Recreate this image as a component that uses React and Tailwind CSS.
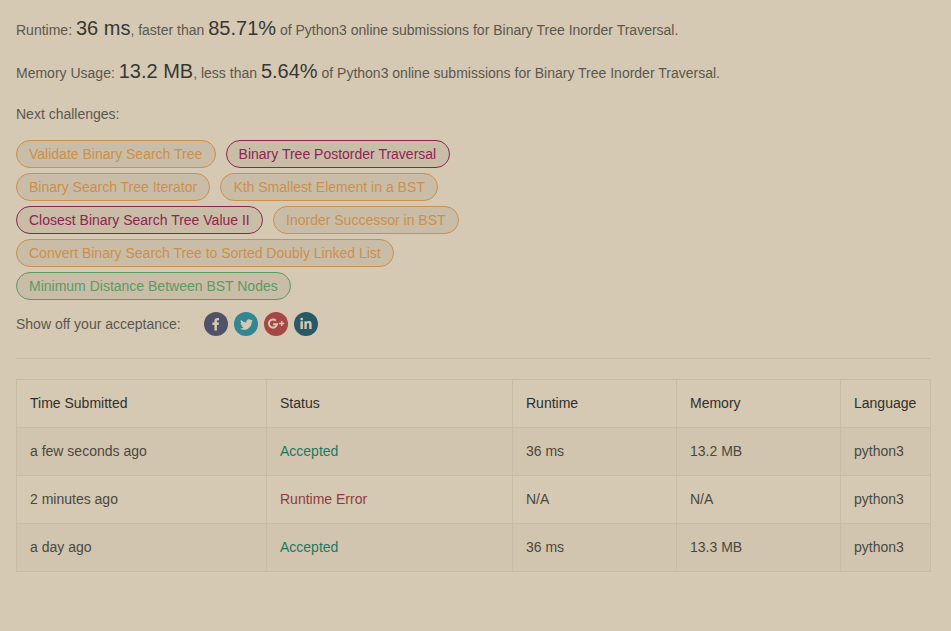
import React from "react";
import { FaTwitter } from "react-icons/fa";

const tones = {
  medium: "border-[#cb904c] text-[#cb904c]",
  hard: "border-[#8f2450] text-[#8f2450]",
  easy: "border-[#5c9a62] text-[#5c9a62]",
};

const challenges = [
  ["Validate Binary Search Tree", "medium"],
  ["Binary Tree Postorder Traversal", "hard"],
  ["Binary Search Tree Iterator", "medium"],
  ["Kth Smallest Element in a BST", "medium"],
  ["Closest Binary Search Tree Value II", "hard"],
  ["Inorder Successor in BST", "medium"],
  ["Convert Binary Search Tree to Sorted Doubly Linked List", "medium"],
  ["Minimum Distance Between BST Nodes", "easy"],
];

function FacebookGlyph() {
  return (
    <svg viewBox="0 0 24 24" className="size-6" fill="currentColor">
      <path d="M10.4 18.4V12.9h-2v-2.4h2V9.1c0-2 1.2-3.1 3-3.1H15v2.3h-1c-.8 0-1.1.4-1.1 1.1v1.1H15l-.3 2.4h-1.8v5.5z" />
    </svg>
  );
}

function TwitterGlyph() {
  return <FaTwitter size={13} className="mt-px" />;
}

function GooglePlusGlyph() {
  return (
    <svg viewBox="0 0 24 24" className="size-6" fill="none" stroke="currentColor">
      <path d="M11.9 8.6A4.1 4.1 0 1 0 13.05 12.2H9.1" strokeWidth="2" />
      <path d="M17.7 8.9v5.2M15.1 11.5h5.2" strokeWidth="1.5" />
    </svg>
  );
}

function LinkedInGlyph() {
  return (
    <svg viewBox="0 0 24 24" className="size-6" fill="currentColor">
      <circle cx="7.7" cy="7.1" r="1.4" />
      <path d="M6.5 9.3h2.4V17H6.5zM10.4 9.3h2.2v1c.5-.8 1.3-1.3 2.4-1.3 1.9 0 2.6 1.2 2.6 3.4V17h-2.4v-4.1c0-1.1-.2-1.8-1.1-1.8s-1.3.7-1.3 1.8V17h-2.4z" />
    </svg>
  );
}

const socials = [
  { name: "Facebook", Glyph: FacebookGlyph, bg: "bg-[#505368]" },
  { name: "Twitter", Glyph: TwitterGlyph, bg: "bg-[#328592]" },
  { name: "Google Plus", Glyph: GooglePlusGlyph, bg: "bg-[#a64646]" },
  { name: "LinkedIn", Glyph: LinkedInGlyph, bg: "bg-[#295967]" },
];

const rows = [
  ["a few seconds ago", "Accepted", "36 ms", "13.2 MB", "python3"],
  ["2 minutes ago", "Runtime Error", "N/A", "N/A", "python3"],
  ["a day ago", "Accepted", "36 ms", "13.3 MB", "python3"],
];

const cell = "border-b border-r border-[#c8bca6] px-[13px] leading-[47px] h-12";

function Strong({ children }) {
  return <span className="text-[20px] text-[#383733]">{children}</span>;
}

function StatusCell({ value }) {
  return <span className={value === "Accepted" ? "text-[#1f775f]" : "text-[#903b3e]"}>{value}</span>;
}

export default function App() {
  return (
    <main className="min-h-screen bg-[#d5c9b3] px-4 pt-[13px] font-['Liberation_Sans',Arial,sans-serif] text-[14px] text-[#5b574e]">
      <p className="h-[43px] leading-[30px] whitespace-nowrap">
        Runtime: <Strong>36 ms</Strong>, faster than <Strong>85.71%</Strong> of Python3 online submissions for Binary Tree
        Inorder Traversal.
      </p>
      <p className="h-12 leading-[30px] whitespace-nowrap">
        Memory Usage: <Strong>13.2 MB</Strong>, less than <Strong>5.64%</Strong> of Python3 online submissions for Binary
        Tree Inorder Traversal.
      </p>
      <p className="leading-5">Next challenges:</p>

      <div className="mt-4 flex w-[460px] flex-wrap gap-x-2.5 gap-y-[5px]">
        {challenges.map(([title, level]) => (
          <a
            key={title}
            className={`h-7 rounded-full border bg-[#c9bda8] pr-[12.3px] pl-3 leading-[26px] whitespace-nowrap ${tones[level]}`}
          >
            {title}
          </a>
        ))}
      </div>

      <div className="mt-3 flex h-6 items-center">
        <span className="w-[188px]">Show off your acceptance:</span>
        <div className="flex gap-1.5">
          {socials.map(({ name, Glyph, bg }) => (
            <a
              key={name}
              aria-label={name}
              className={`flex size-6 items-center justify-center rounded-full text-[#d5c9b3] ${bg}`}
            >
              <Glyph />
            </a>
          ))}
        </div>
      </div>

      <hr className="mt-[22px] w-[915px] border-t border-[#c8bca6]" />

      <div className="mt-5 w-[915px] border-t border-l border-[#c8bca6]">
        <div className="grid grid-cols-[250px_246px_164px_164px_90px] text-[#302f2c]">
          {["Time Submitted", "Status", "Runtime", "Memory", "Language"].map((h) => (
            <div key={h} className={cell}>
              {h}
            </div>
          ))}
        </div>
        {rows.map((row, i) => (
          <div
            key={row[0]}
            className={`grid grid-cols-[250px_246px_164px_164px_90px] text-[#4b4841] ${i % 2 === 0 ? "bg-[#d1c5af]" : ""}`}
          >
            {row.map((value, j) => (
              <div key={j} className={cell}>
                {j === 1 ? <StatusCell value={value} /> : value}
              </div>
            ))}
          </div>
        ))}
      </div>
    </main>
  );
}
